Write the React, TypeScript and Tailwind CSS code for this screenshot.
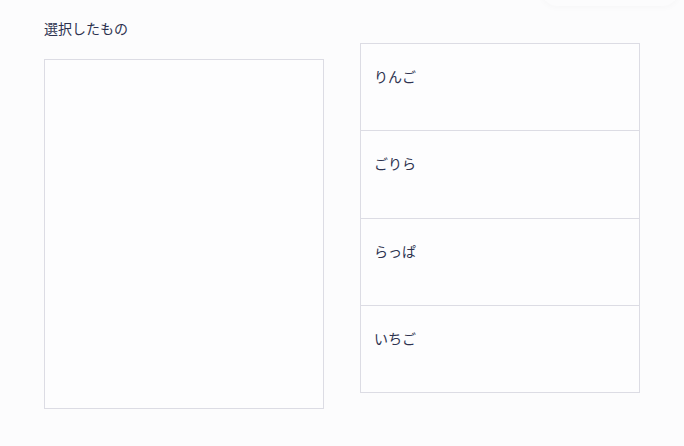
import React from "react";

const items = ["りんご", "ごりら", "らっぱ", "いちご"];

export default function App() {
  return (
    <div
      className="relative w-[684px] h-[446px] overflow-hidden bg-[#fcfcfd] text-[#2e3350]"
      style={{ fontFamily: '"Noto Sans CJK JP", "Noto Sans", sans-serif' }}
    >
      <div className="absolute left-[540px] top-[-30px] w-[140px] h-[36px] rounded-full bg-[#fcfcfd] shadow-[0_2px_6px_rgba(0,0,0,0.025)]" />
      <div className="flex items-start gap-[36px] pl-[44px] pt-[18px]">
        <div className="flex flex-col">
          <div className="text-[14px] leading-[20px] h-[20px]">選択したもの</div>
          <div className="mt-[21px] w-[280px] h-[350px] border border-[#dcdce4] bg-[#fdfdfe]" />
        </div>
        <div className="mt-[25px] flex flex-col w-[280px] h-[350px] border border-[#dcdce4] bg-[#fdfdfe]">
          {items.map((t, i) => (
            <div
              key={t}
              className={`flex-1 px-[13px] pt-[22px] text-[14px] leading-[20px] ${
                i < items.length - 1 ? "border-b border-[#dcdce4]" : ""
              }`}
            >
              {t}
            </div>
          ))}
        </div>
      </div>
    </div>
  );
}
